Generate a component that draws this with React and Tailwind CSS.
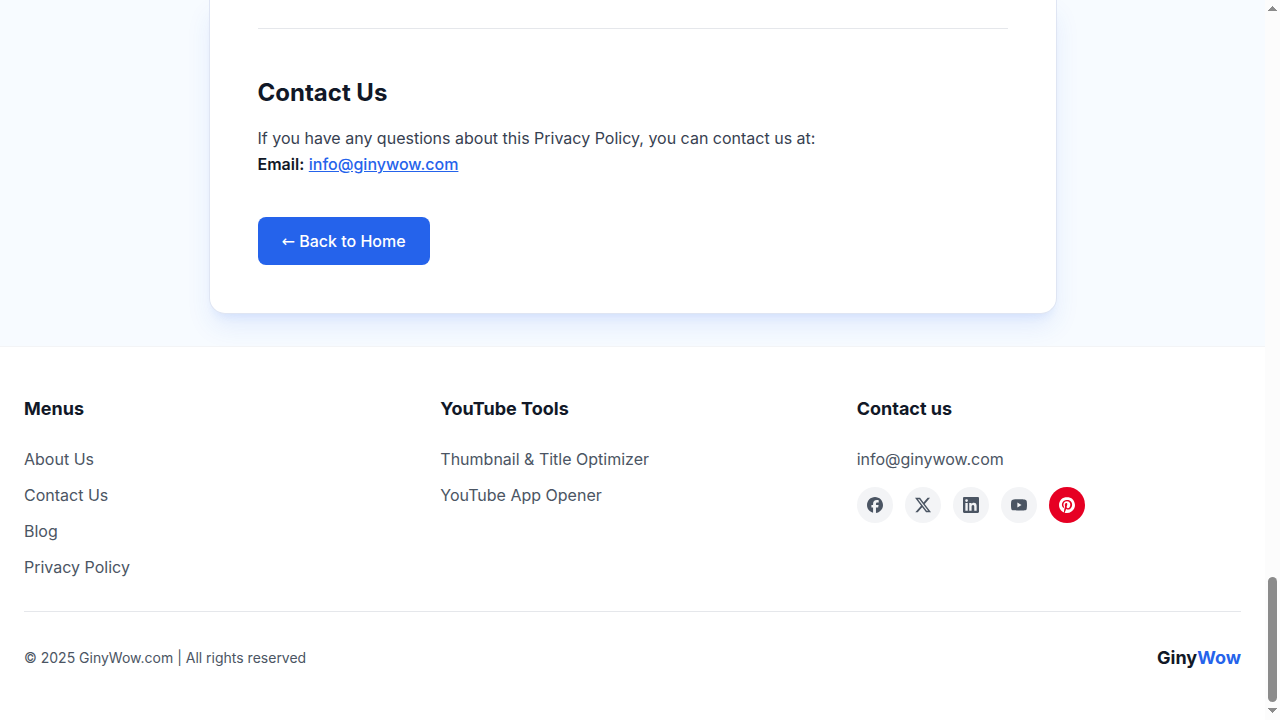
import React from "react";
import { SiFacebook, SiYoutube, SiPinterest } from "react-icons/si";

const menus = ["About Us", "Contact Us", "Blog", "Privacy Policy"];
const tools = ["Thumbnail & Title Optimizer", "YouTube App Opener"];

function XLogo({ className }) {
  return (
    <svg className={className} viewBox="0 0 24 24" fill="currentColor">
      <path d="M18.901 1.153h3.68l-8.04 9.19L24 22.846h-7.406l-5.8-7.584-6.638 7.584H.474l8.6-9.83L0 1.154h7.594l5.243 6.932ZM17.61 20.644h2.039L6.486 3.24H4.298Z" />
    </svg>
  );
}

function LinkedIn({ className }) {
  return (
    <svg className={className} viewBox="0 0 24 24" fill="currentColor">
      <path d="M20.447 20.452h-3.554v-5.569c0-1.328-.027-3.037-1.852-3.037-1.853 0-2.136 1.445-2.136 2.939v5.667H9.351V9h3.414v1.561h.046c.477-.9 1.637-1.85 3.37-1.85 3.601 0 4.267 2.37 4.267 5.455v6.286zM5.337 7.433a2.062 2.062 0 0 1-2.063-2.065 2.064 2.064 0 1 1 2.063 2.065zm1.782 13.019H3.555V9h3.564v11.452zM22.225 0H1.771C.792 0 0 .774 0 1.729v20.542C0 23.227.792 24 1.771 24h20.451C23.2 24 24 23.227 24 22.271V1.729C24 .774 23.2 0 22.222 0h.003z" />
    </svg>
  );
}

const socials = [
  { name: "Facebook", Icon: SiFacebook, tone: "bg-[#f3f4f6] text-[#4b5563]" },
  { name: "X", Icon: XLogo, tone: "bg-[#f3f4f6] text-[#4b5563]" },
  { name: "LinkedIn", Icon: LinkedIn, tone: "bg-[#f3f4f6] text-[#4b5563]" },
  { name: "YouTube", Icon: SiYoutube, tone: "bg-[#f3f4f6] text-[#4b5563]" },
  { name: "Pinterest", Icon: SiPinterest, tone: "bg-[#e60023] text-white" },
];

function LinkColumn({ title, links }) {
  return (
    <div>
      <h3 className="mb-6 text-lg font-bold text-[#111827]">{title}</h3>
      <ul className="space-y-3 text-[#4b5563]">
        {links.map((l) => (
          <li key={l}><a>{l}</a></li>
        ))}
      </ul>
    </div>
  );
}

function Scrollbar() {
  return (
    <div className="flex w-[15px] shrink-0 flex-col items-center bg-[#fcfcfc]">
      <svg className="mt-[6px] h-[5px] w-[15px]" viewBox="0 0 15 5" shapeRendering="crispEdges"><path d="M7.5 0 12 5H3Z" fill="#8b8b8b" /></svg>
      <div className="mt-auto h-[125px] w-[9px] rounded-full bg-[#8b8b8b]" />
      <svg className="mt-[6px] mb-[7px] h-[5px] w-[15px]" viewBox="0 0 15 5" shapeRendering="crispEdges"><path d="M3 0H12L7.5 5Z" fill="#8b8b8b" /></svg>
    </div>
  );
}

export default function App() {
  return (
    <div className="flex h-[720px] w-[1280px] overflow-hidden bg-white font-['Inter',sans-serif] text-base">
      <div className="flex min-w-0 flex-1 flex-col">
        <main className="h-[346px] shrink-0 overflow-hidden bg-[#f7fbff]">
          <div className="mx-auto max-w-4xl px-6">
            <div className="h-[314px] rounded-b-2xl border border-t-0 border-[#dfe5f3] bg-white px-12 pt-7 shadow-[0_14px_26px_-2px_rgba(37,99,235,0.1),0_8px_10px_-6px_rgba(37,99,235,0.1)]">
              <hr className="border-t border-[#e5e7eb]" />
              <h2 className="mt-12 mb-4 text-2xl font-bold text-[#111827]">Contact Us</h2>
              <p className="leading-[26px] text-[#374151]">
                If you have any questions about this Privacy Policy, you can contact us at:
                <br />
                <strong className="font-semibold text-[#111827]">Email:</strong>{" "}
                <a className="font-medium text-[#2563eb] underline">info@ginywow.com</a>
              </p>
              <a className="mt-10 inline-block h-12 rounded-lg bg-[#2563eb] px-6 py-3 font-medium text-white">
                <span className="font-['DejaVu_Sans',sans-serif] leading-none">←</span> Back to Home
              </a>
            </div>
          </div>
        </main>
        <footer className="flex-1 border-t border-[#f3f4f6] bg-white px-6 pt-12">
          <div className="grid grid-cols-3 gap-8">
            <LinkColumn title="Menus" links={menus} />
            <LinkColumn title="YouTube Tools" links={tools} />
            <div>
              <h3 className="mb-6 text-lg font-bold text-[#111827]">Contact us</h3>
              <p className="text-[#4b5563]">info@ginywow.com</p>
              <div className="mt-4 flex gap-3">
                {socials.map(({ name, Icon, tone }) => (
                  <a key={name} className={`flex size-9 items-center justify-center rounded-full ${tone}`}>
                    <Icon className="size-4" />
                  </a>
                ))}
              </div>
            </div>
          </div>
          <div className="mt-8 flex items-center justify-between border-t border-[#e5e7eb] pt-8">
            <p className="text-sm text-[#4b5563]">© 2025 GinyWow.com | All rights reserved</p>
            <div className="text-lg font-bold text-[#111827]">Giny<span className="text-[#2563eb]">Wow</span></div>
          </div>
        </footer>
      </div>
      <Scrollbar />
    </div>
  );
}
